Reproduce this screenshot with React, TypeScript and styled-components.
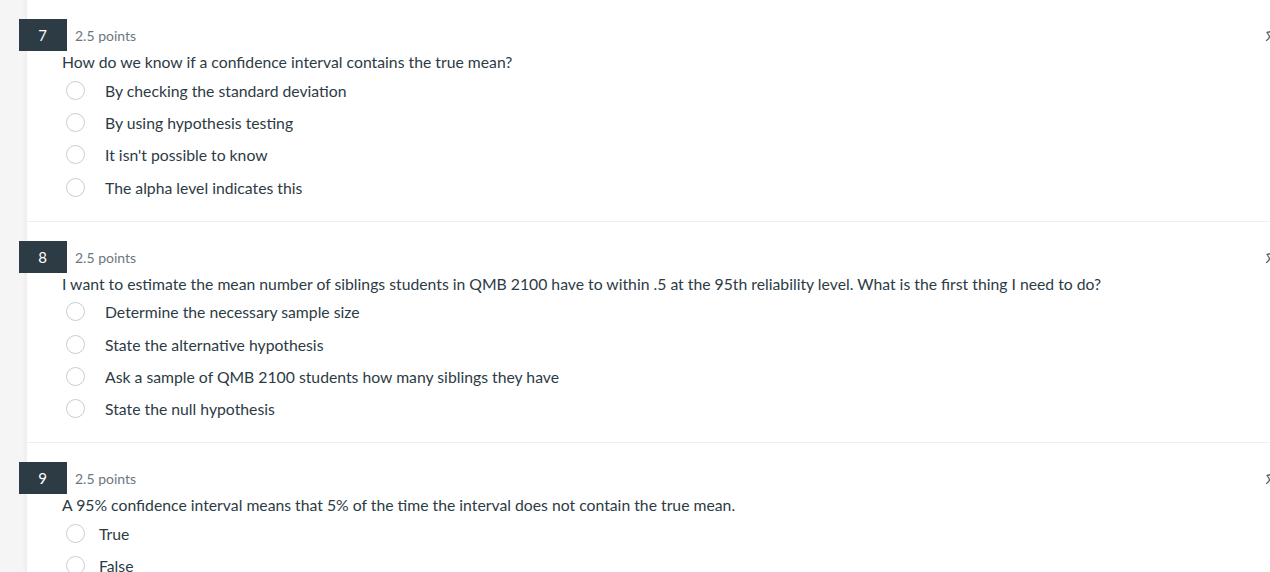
import React from "react";
import styled, { createGlobalStyle } from "styled-components";

const Global = createGlobalStyle`
  html, body { margin: 0; padding: 0; background: #fff; }
  body { font-family: Lato, "Open Sans", sans-serif; color: #2d3b45; overflow: hidden; }
`;

const Page = styled.div`
  display: flex;
  width: 1270px;
  height: 572px;
  overflow: hidden;
`;

const Strip = styled.div`
  flex: 0 0 27px;
  background: linear-gradient(to right, #f5f5f5 0, #f5f5f5 22px, #eeeeee 27px);
`;

const Main = styled.div`
  flex: 1;
  min-width: 0;
`;

const Block = styled.section`
  padding: 19px 0 17px 36px;
  border-bottom: 1px solid #eef0f1;
`;

const Header = styled.div`
  display: flex;
  align-items: center;
  margin-left: -44px;
  height: 32px;
`;

const Badge = styled.div`
  width: 48px;
  height: 32px;
  background: #2d3b45;
  color: #fff;
  display: flex;
  align-items: center;
  justify-content: center;
  font-size: 15px;
  padding-right: 1px;
  box-sizing: border-box;
`;

const Points = styled.span`
  margin-left: 8px;
  font-size: 14px;
  color: #6b7780;
  flex: 1;
  padding-top: 1px;
`;

const Flag = styled.svg`
  width: 9px;
  height: 12px;
  margin-right: -3px;
  margin-top: 2px;
`;

const Question = styled.div`
  font-size: 15.75px;
  line-height: 22px;
  margin: 0 0 1px -1px;
`;

const OptionRow = styled.label<{ $gap: number }>`
  display: flex;
  align-items: center;
  height: 32.4px;
  padding-left: 3px;
  font-size: 15.75px;
  gap: ${(p) => p.$gap}px;
`;

const Radio = styled.span`
  width: 17px;
  height: 17px;
  border-radius: 50%;
  border: 1px solid #c7cdd1;
  background: #fff;
  flex: 0 0 auto;
`;

type Q = { n: number; text: string; options: string[]; gap: number };

const questions: Q[] = [
  {
    n: 7,
    text: "How do we know if a confidence interval contains the true mean?",
    options: [
      "By checking the standard deviation",
      "By using hypothesis testing",
      "It isn't possible to know",
      "The alpha level indicates this",
    ],
    gap: 20,
  },
  {
    n: 8,
    text: "I want to estimate the mean number of siblings students in QMB 2100 have to within .5 at the 95th reliability level. What is the first thing I need to do?",
    options: [
      "Determine the necessary sample size",
      "State the alternative hypothesis",
      "Ask a sample of QMB 2100 students how many siblings they have",
      "State the null hypothesis",
    ],
    gap: 20,
  },
  {
    n: 9,
    text: "A 95% confidence interval means that 5% of the time the interval does not contain the true mean.",
    options: ["True", "False"],
    gap: 14,
  },
];

export default function App() {
  return (
    <Page>
      <Global />
      <Strip />
      <Main>
        {questions.map((q) => (
          <Block key={q.n}>
            <Header>
              <Badge>{q.n}</Badge>
              <Points>2.5 points</Points>
              <Flag viewBox="0 0 9 12">
                <path d="M7 1.5 L3 2.5 L5 5.5 Q6.5 8 2.5 10.5" fill="none" stroke="#56646e" strokeWidth="1.3" strokeLinejoin="round" strokeLinecap="round" />
              </Flag>
            </Header>
            <Question>{q.text}</Question>
            {q.options.map((o) => (
              <OptionRow key={o} $gap={q.gap}>
                <Radio />
                <span>{o}</span>
              </OptionRow>
            ))}
          </Block>
        ))}
      </Main>
    </Page>
  );
}
